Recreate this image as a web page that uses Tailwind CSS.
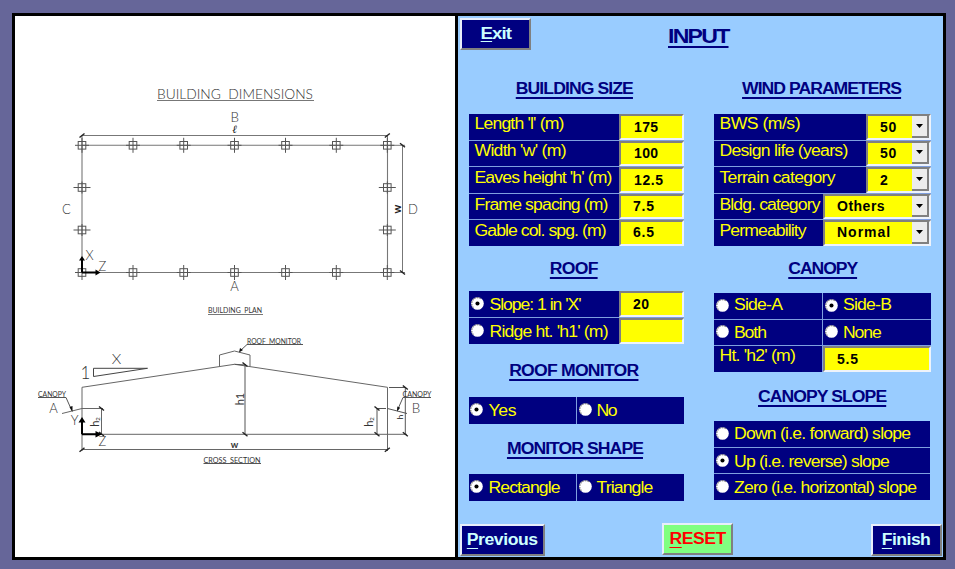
<!DOCTYPE html>
<html lang="en">
<head>
<meta charset="utf-8">
<title>Building input</title>
<script src="https://cdn.jsdelivr.net/npm/@tailwindcss/browser@4"></script>
</head>
<body class="w-[955px] h-[569px] overflow-hidden bg-[#666699] pt-[13px] pl-3 font-['Liberation_Sans',Arial,sans-serif]">
<svg class="hidden">
  <defs>
    <symbol id="off" viewBox="0 0 14 14"><circle cx="7" cy="7" r="6.8" fill="#fff"/><path d="M2.600 11.400A6 6 0 0 1 11.400 2.600" fill="none" stroke="#777" stroke-width="1.300" stroke-dasharray="1.600 1.100"/></symbol>
    <symbol id="on" viewBox="0 0 14 14"><circle cx="7" cy="7" r="6.8" fill="#fff"/><path d="M2.600 11.400A6 6 0 0 1 11.400 2.600" fill="none" stroke="#777" stroke-width="1.300" stroke-dasharray="1.600 1.100"/><circle cx="7" cy="7" r="2.200" fill="#000"/></symbol>
  </defs>
</svg>
<main class="flex w-[934px] h-[547px] border-3 border-black bg-[#99ccff]">

  <section class="w-[440px] shrink-0 bg-white">
    <svg width="440" height="541" viewBox="15 16 440 541" fill="none" stroke="#555" stroke-width="1" class="block">
      <defs>
        <g id="sq" stroke="#555"><rect x="-3.800" y="-3.800" width="7.600" height="7.600"/></g>
        <g id="v"><use href="#sq"/><path d="M0-7.500V7.500M-7 0H7" stroke="#555"/></g>
        <g id="h"><use href="#sq"/><path d="M-8.500 0H8.500M0-6V6" stroke="#555"/></g>
        <path id="ta" d="M-2.500 2L2.500-2" stroke="#222" stroke-width="1.400"/>
        <path id="tb" d="M-2.500-2L2.500 2" stroke="#222" stroke-width="1.400"/>
      </defs>
      <!-- plan -->
      <path d="M157 100.500H314M208 314.500H263" stroke="#777"/>
      <path d="M82 135.500H387.500M402.500 145V272.500M387.500 145.300H405M387.500 272.500H405" stroke="#777"/>
      <path d="M82 145.300H387.500V272.500H82Z" stroke="#777" stroke-width="1.100"/>
      <path d="M82 135V145M387.500 135V145" stroke="#777"/>
      <use href="#v" x="82" y="145.300"/><use href="#v" x="133" y="145.300"/><use href="#v" x="183.700" y="145.300"/><use href="#v" x="234.500" y="145.300"/><use href="#v" x="285.500" y="145.300"/><use href="#v" x="336.300" y="145.300"/><use href="#v" x="387.300" y="145.300"/>
      <use href="#v" x="82" y="272.500"/><use href="#v" x="133" y="272.500"/><use href="#v" x="183.700" y="272.500"/><use href="#v" x="234.500" y="272.500"/><use href="#v" x="285.500" y="272.500"/><use href="#v" x="336.300" y="272.500"/><use href="#v" x="387.300" y="272.500"/>
      <use href="#h" x="82" y="187.500"/><use href="#h" x="82" y="230"/><use href="#h" x="387.300" y="187.500"/><use href="#h" x="387.300" y="230"/>
      <use href="#ta" x="82" y="135.500"/><use href="#ta" x="387.300" y="135.500"/><use href="#tb" x="402.500" y="145.300"/><use href="#tb" x="402.500" y="272.500"/>
      <path d="M82 272.500V259M82 272.500H96" stroke="#000" stroke-width="2"/>
      <path d="M82 256L85 260.500H79ZM100.500 272.500L95.500 269.500V275.500Z" fill="#000" stroke="none"/>
      <!-- section -->
      <path d="M82 387.300V451M82 387.300L234.500 364.300L387.500 387.300V451M82 434.300H407M82 449.500H387.500" stroke="#666"/>
      <path d="M219.500 366.500V355L234.500 351L250 355V366.500" stroke="#666"/>
      <path d="M93.500 368.300H147.500L93.500 376.500Z" stroke="#444"/>
      <path d="M62 413.500L82 408.500H103M101.500 408.500V434.300" stroke="#666"/>
      <path d="M38 397.500H66L72 411M247 344.500H303M247 344.500L240 351M245 364.300V434.300M234.500 364.300L246 365" stroke="#555"/>
      <path d="M389 387.500H406M405.300 387.500V434.300M387.500 408.500L407 413.500M377 408.500V434.300M377 408.500H386" stroke="#555"/>
      <path d="M431 397.500H403L397.500 410M203.500 463.500H261" stroke="#555"/>
      <path d="M72.500 412L69.500 407L72.500 406ZM239 352.500L240 348L243 350ZM397 411.500L397.300 406.500L400.200 407.800Z" fill="#111" stroke="none"/>
      <use href="#ta" x="82" y="449.700"/><use href="#ta" x="387.300" y="449.700"/>
      <use href="#tb" x="101.500" y="408.500"/><use href="#tb" x="101.500" y="434"/><use href="#tb" x="245" y="364.500"/><use href="#tb" x="245" y="434.300"/><use href="#tb" x="377" y="408.500"/><use href="#tb" x="377" y="434.300"/><use href="#tb" x="405.300" y="387.500"/><use href="#tb" x="405.300" y="434.300"/>
      <path d="M82 434.300V421M82 434.300H96" stroke="#000" stroke-width="2"/>
      <path d="M82 417L85.500 422.500H78.500ZM102 434.300L95.500 431V437.500Z" fill="#000" stroke="none"/>
      <!-- lettering -->
      <g stroke="none" fill="#333" font-family="Lato, sans-serif" font-weight="300" font-size="13" text-anchor="middle">
        <text x="157" y="99.300" text-anchor="start" textLength="156" lengthAdjust="spacingAndGlyphs" xml:space="preserve">BUILDING  DIMENSIONS</text>
        <text x="234.700" y="122" textLength="8.500" lengthAdjust="spacingAndGlyphs">B</text><text x="234.500" y="133" font-family="'DejaVu Serif'" font-style="italic" font-size="11" fill="#111">ℓ</text>
        <text x="66.500" y="213.500">C</text><text x="413" y="213.500">D</text><text x="234.500" y="290.500">A</text>
        <text x="89.500" y="259.500">X</text><text x="102.500" y="270.500">Z</text>
        <text transform="translate(400.500 209) rotate(-90)" font-weight="700" font-size="11" fill="#222">w</text>
        <text x="116.500" y="363.500" textLength="9.500" lengthAdjust="spacingAndGlyphs">X</text><text x="85.500" y="378.500" font-size="17">1</text>
        <text x="53.500" y="413">A</text><text x="74.500" y="424.500">Y</text><text x="102.500" y="446">Z</text><text x="416" y="413" textLength="8.500" lengthAdjust="spacingAndGlyphs">B</text>
        <text transform="translate(99 422) rotate(-90)" font-size="11" font-weight="400">h<tspan font-size="6" dy="1">2</tspan></text>
        <text transform="translate(244 399) rotate(-90)" font-size="11" font-weight="400">h1</text>
        <text transform="translate(373 422) rotate(-90)" font-size="11" font-weight="400">h<tspan font-size="6" dy="1">2</tspan></text>
        <text transform="translate(402.500 417) rotate(-90)" font-size="8" font-weight="400" fill="#111">h</text>
        <text x="234.500" y="448" font-size="9" font-weight="700" textLength="7.500" lengthAdjust="spacingAndGlyphs">w</text>
      </g>
      <g stroke="none" fill="#333" font-family="Lato, sans-serif" font-size="7">
        <text x="208" y="312.800" textLength="54" lengthAdjust="spacingAndGlyphs" xml:space="preserve">BUILDING  PLAN</text>
        <text x="247" y="344" textLength="54" lengthAdjust="spacingAndGlyphs" xml:space="preserve">ROOF  MONITOR</text>
        <text x="38" y="397" textLength="28" lengthAdjust="spacingAndGlyphs">CANOPY</text>
        <text x="402.500" y="397" textLength="29" lengthAdjust="spacingAndGlyphs">CANOPY</text>
        <text x="203.500" y="462.800" textLength="57" lengthAdjust="spacingAndGlyphs" xml:space="preserve">CROSS  SECTION</text>
      </g>
    </svg>
  </section>

  <section class="ml-[3px] w-[485px] h-[541px] shrink-0 flex flex-col justify-between shadow-[-3px_0_0_#000] text-[#000080]">
    <header class="flex pt-[2px] pl-[2px] h-[66px]">
      <button class="w-[71px] h-[32px] border-2 border-t-[#e8eefa] border-l-[#e8eefa] border-b-[#808080] border-r-[#808080] bg-[#000080] text-[#ccffff] font-bold text-[17px] leading-[28px] underline-offset-2"><span class="inline-block scale-x-110 tracking-[-0.9px]"><span class="underline">E</span>xit</span></button>
      <h1 class="ml-[137px] mt-[4px] h-[28px] leading-[28px] text-[21px] font-bold origin-left scale-x-110 tracking-[-1.6px] underline decoration-2 underline-offset-[3px]">INPUT</h1>
    </header>

    <div class="flex flex-1 pl-[11px] text-[16px] leading-[18px]">
      <div class="w-[215px] shrink-0">
        <h2 class="h-[32px] pl-[42.5px] -mt-[2px] whitespace-nowrap font-bold origin-left scale-x-110 tracking-[-0.83px] underline underline-offset-[3px] decoration-[1.5px]">BUILDING SIZE</h2>
        <div class="mt-[2px] grid grid-rows-5 h-[132px] gap-[1px] bg-[#7f9fdf] text-[#ffff00]">
          <div class="flex bg-[#000080]"><span class="w-[150px] pl-[5px] pt-px whitespace-nowrap origin-left scale-x-110 tracking-[-0.75px]">Length 'l' (m)</span><div class="w-[65px] border-2 border-t-[#808080] border-l-[#808080] border-b-[#eef3fb] border-r-[#eef3fb] bg-[#ffff00] pl-[13px] text-black font-bold text-[14px] leading-[22px] tracking-[0.4px]">175</div></div>
          <div class="flex bg-[#000080]"><span class="w-[150px] pl-[5px] pt-px whitespace-nowrap origin-left scale-x-110 tracking-[-0.65px]">Width 'w' (m)</span><div class="w-[65px] border-2 border-t-[#808080] border-l-[#808080] border-b-[#eef3fb] border-r-[#eef3fb] bg-[#ffff00] pl-[13px] text-black font-bold text-[14px] leading-[21px] tracking-[0.4px]">100</div></div>
          <div class="flex bg-[#000080]"><span class="w-[150px] pl-[5px] pt-[2px] whitespace-nowrap origin-left scale-x-110 tracking-[-0.79px]">Eaves height 'h' (m)</span><div class="w-[65px] border-2 border-t-[#808080] border-l-[#808080] border-b-[#eef3fb] border-r-[#eef3fb] bg-[#ffff00] pl-[13px] text-black font-bold text-[14px] leading-[22px] tracking-[0.6px]">12.5</div></div>
          <div class="flex bg-[#000080]"><span class="w-[150px] pl-[5px] pt-[2px] whitespace-nowrap origin-left scale-x-110 tracking-[-0.78px]">Frame spacing (m)</span><div class="w-[65px] border-2 border-t-[#808080] border-l-[#808080] border-b-[#eef3fb] border-r-[#eef3fb] bg-[#ffff00] pl-[12px] text-black font-bold text-[14px] leading-[21px] tracking-[0.8px]">7.5</div></div>
          <div class="flex bg-[#000080]"><span class="w-[150px] pl-[5px] pt-[2px] whitespace-nowrap origin-left scale-x-110 tracking-[-0.84px]">Gable col. spg. (m)</span><div class="w-[65px] border-2 border-t-[#808080] border-l-[#808080] border-b-[#eef3fb] border-r-[#eef3fb] bg-[#ffff00] pl-[12px] text-black font-bold text-[14px] leading-[21px] tracking-[0.8px]">6.5</div></div>
        </div>

        <h2 class="mt-[14px] h-[31px] pl-[73.5px] font-bold origin-left scale-x-110 tracking-[-0.7px] underline underline-offset-[3px] decoration-[1.5px]">ROOF</h2>
        <div class="grid grid-rows-2 h-[53px] gap-[1px] bg-[#7f9fdf] text-[#ffff00]">
          <div class="flex bg-[#000080]"><svg class="ml-[2px] mt-[6px] size-[13px]"><use href="#on"/></svg><span class="w-[135px] pl-[5px] pt-[5px] whitespace-nowrap origin-left scale-x-110 tracking-[-0.94px]">Slope: 1 in 'X'</span><div class="w-[65px] border-2 border-t-[#808080] border-l-[#808080] border-b-[#eef3fb] border-r-[#eef3fb] bg-[#ffff00] pl-[12px] text-black font-bold text-[14px] leading-[22px] tracking-[0.4px]">20</div></div>
          <div class="flex bg-[#000080]"><svg class="ml-[2px] mt-[6px] size-[13px]"><use href="#off"/></svg><span class="w-[135px] pl-[5px] pt-[5px] whitespace-nowrap origin-left scale-x-110 tracking-[-0.74px]">Ridge ht. 'h1' (m)</span><div class="w-[65px] border-2 border-t-[#808080] border-l-[#808080] border-b-[#eef3fb] border-r-[#eef3fb] bg-[#ffff00]"></div></div>
        </div>

        <h2 class="mt-[18px] h-[35px] pl-[36.5px] whitespace-nowrap font-bold origin-left scale-x-110 tracking-[-0.7px] underline underline-offset-[3px] decoration-[1.5px]">ROOF MONITOR</h2>
        <div class="grid grid-cols-2 h-[27px] gap-[1px] bg-[#7f9fdf] text-[#ffff00]">
          <div class="flex bg-[#000080]"><svg class="ml-[1px] mt-[6px] size-[13px]"><use href="#on"/></svg><span class="pl-[5px] pt-[5px] origin-left scale-x-110 tracking-[-0.3px]">Yes</span></div>
          <div class="flex bg-[#000080]"><svg class="ml-[2px] mt-[6px] size-[13px]"><use href="#off"/></svg><span class="pl-[4px] pt-[5px] origin-left scale-x-110 tracking-[-1.2px]">No</span></div>
        </div>

        <h2 class="mt-[16px] h-[34px] pl-[34.5px] whitespace-nowrap font-bold origin-left scale-x-110 tracking-[-0.86px] underline underline-offset-[3px] decoration-[1.5px]">MONITOR SHAPE</h2>
        <div class="grid grid-cols-2 h-[27px] gap-[1px] bg-[#7f9fdf] text-[#ffff00]">
          <div class="flex bg-[#000080]"><svg class="ml-[1px] mt-[6px] size-[13px]"><use href="#on"/></svg><span class="pl-[5px] pt-[5px] origin-left scale-x-110 tracking-[-0.82px]">Rectangle</span></div>
          <div class="flex bg-[#000080]"><svg class="ml-[2px] mt-[6px] size-[13px]"><use href="#off"/></svg><span class="pl-[4px] pt-[5px] origin-left scale-x-110 tracking-[-0.77px]">Triangle</span></div>
        </div>
      </div>

      <div class="ml-[30px] w-[217px] shrink-0">
        <h2 class="h-[32px] pl-[25.5px] -mt-[2px] whitespace-nowrap font-bold origin-left scale-x-110 tracking-[-0.89px] underline underline-offset-[3px] decoration-[1.5px]">WIND PARAMETERS</h2>
        <div class="mt-[2px] grid grid-rows-5 h-[132px] gap-[1px] bg-[#7f9fdf] text-[#ffff00]">
          <div class="flex bg-[#000080]"><span class="w-[152px] pl-[5px] pt-px whitespace-nowrap origin-left scale-x-110 tracking-[-0.46px]">BWS (m/s)</span><div class="flex w-[65px] border-2 border-t-[#808080] border-l-[#808080] border-b-[#eef3fb] border-r-[#eef3fb] bg-[#ffff00] pl-[12px] text-black font-bold text-[14px] leading-[22px] tracking-[0.8px]">50<i class="ml-auto flex w-[17px] items-center justify-center border-r-2 border-b-2 border-[#808080] bg-[#ececec]"><svg width="7" height="4"><path d="M0 0H7L3.500 4Z"/></svg></i></div></div>
          <div class="flex bg-[#000080]"><span class="w-[152px] pl-[5px] pt-px whitespace-nowrap origin-left scale-x-110 tracking-[-0.66px]">Design life (years)</span><div class="flex w-[65px] border-2 border-t-[#808080] border-l-[#808080] border-b-[#eef3fb] border-r-[#eef3fb] bg-[#ffff00] pl-[12px] text-black font-bold text-[14px] leading-[21px] tracking-[0.8px]">50<i class="ml-auto flex w-[17px] items-center justify-center border-r-2 border-b-2 border-[#808080] bg-[#ececec]"><svg width="7" height="4"><path d="M0 0H7L3.500 4Z"/></svg></i></div></div>
          <div class="flex bg-[#000080]"><span class="w-[152px] pl-[5px] pt-[2px] whitespace-nowrap origin-left scale-x-110 tracking-[-0.62px]">Terrain category</span><div class="flex w-[65px] border-2 border-t-[#808080] border-l-[#808080] border-b-[#eef3fb] border-r-[#eef3fb] bg-[#ffff00] pl-[12px] text-black font-bold text-[14px] leading-[22px]">2<i class="ml-auto flex w-[17px] items-center justify-center border-r-2 border-b-2 border-[#808080] bg-[#ececec]"><svg width="7" height="4"><path d="M0 0H7L3.500 4Z"/></svg></i></div></div>
          <div class="flex bg-[#000080]"><span class="w-[109px] pl-[5px] pt-[2px] whitespace-nowrap origin-left scale-x-110 tracking-[-0.81px]">Bldg. category</span><div class="flex w-[108px] border-2 border-t-[#808080] border-l-[#808080] border-b-[#eef3fb] border-r-[#eef3fb] bg-[#ffff00] pl-[12px] text-black font-bold text-[14px] leading-[21px] tracking-[0.5px]">Others<i class="ml-auto flex w-[17px] items-center justify-center border-r-2 border-b-2 border-[#808080] bg-[#ececec]"><svg width="7" height="4"><path d="M0 0H7L3.500 4Z"/></svg></i></div></div>
          <div class="flex bg-[#000080]"><span class="w-[109px] pl-[5px] pt-[2px] whitespace-nowrap origin-left scale-x-110 tracking-[-0.81px]">Permeability</span><div class="flex w-[108px] border-2 border-t-[#808080] border-l-[#808080] border-b-[#eef3fb] border-r-[#eef3fb] bg-[#ffff00] pl-[12px] text-black font-bold text-[14px] leading-[21px] tracking-[1px]">Normal<i class="ml-auto flex w-[17px] items-center justify-center border-r-2 border-b-2 border-[#808080] bg-[#ececec]"><svg width="7" height="4"><path d="M0 0H7L3.500 4Z"/></svg></i></div></div>
        </div>

        <h2 class="mt-[14px] h-[33px] pl-[67.5px] font-bold origin-left scale-x-110 tracking-[-0.98px] underline underline-offset-[3px] decoration-[1.5px]">CANOPY</h2>
        <div class="grid grid-cols-2 grid-rows-3 h-[79px] gap-[1px] bg-[#7f9fdf] text-[#ffff00]">
          <div class="flex bg-[#000080]"><svg class="ml-[2px] mt-[6px] size-[13px]"><use href="#off"/></svg><span class="pl-[4.5px] pt-[3px] origin-left scale-x-110 tracking-[-0.7px]">Side-A</span></div>
          <div class="flex bg-[#000080]"><svg class="ml-[2px] mt-[6px] size-[13px]"><use href="#on"/></svg><span class="pl-[4.5px] pt-[3px] origin-left scale-x-110 tracking-[-0.7px]">Side-B</span></div>
          <div class="flex bg-[#000080]"><svg class="ml-[2px] mt-[5px] size-[13px]"><use href="#off"/></svg><span class="pl-[4.5px] pt-[4px] origin-left scale-x-110 tracking-[-0.97px]">Both</span></div>
          <div class="flex bg-[#000080]"><svg class="ml-[2px] mt-[5px] size-[13px]"><use href="#off"/></svg><span class="pl-[4.5px] pt-[4px] origin-left scale-x-110 tracking-[-0.95px]">None</span></div>
          <div class="flex bg-[#000080]"><span class="pl-[5px] pt-px origin-left scale-x-110 tracking-[-0.72px]">Ht. 'h2' (m)</span></div>
          <div class="border-2 border-t-[#808080] border-l-[#808080] border-b-[#eef3fb] border-r-[#eef3fb] bg-[#ffff00] pl-[12px] text-black font-bold text-[14px] leading-[22px] tracking-[0.8px]">5.5</div>
        </div>

        <h2 class="mt-[16px] h-[33px] pl-[40px] whitespace-nowrap font-bold origin-left scale-x-110 tracking-[-0.86px] underline underline-offset-[3px] decoration-[1.5px]">CANOPY SLOPE</h2>
        <div class="grid grid-rows-3 h-[79px] w-[216px] gap-[1px] bg-[#7f9fdf] text-[#ffff00]">
          <div class="flex bg-[#000080]"><svg class="ml-[2px] mt-[6px] size-[13px]"><use href="#off"/></svg><span class="pl-[4.5px] pt-[4px] whitespace-nowrap origin-left scale-x-110 tracking-[-0.7px]">Down (i.e. forward) slope</span></div>
          <div class="flex bg-[#000080]"><svg class="ml-[2px] mt-[6px] size-[13px]"><use href="#on"/></svg><span class="pl-[4.5px] pt-[5px] whitespace-nowrap origin-left scale-x-110 tracking-[-0.71px]">Up (i.e. reverse) slope</span></div>
          <div class="flex bg-[#000080]"><svg class="ml-[2px] mt-[6px] size-[13px]"><use href="#off"/></svg><span class="pl-[4.5px] pt-[5px] whitespace-nowrap origin-left scale-x-110 tracking-[-0.72px]">Zero (i.e. horizontal) slope</span></div>
        </div>
      </div>
    </div>

    <footer class="flex h-[34px] items-start pl-[2px] font-bold text-[16px] leading-[28px] underline-offset-[3px]">
      <button class="mt-[1px] w-[85px] h-[32px] border-2 border-t-[#e8eefa] border-l-[#e8eefa] border-b-[#808080] border-r-[#808080] bg-[#000080] text-[#ccffff]"><span class="inline-block scale-x-110 tracking-[-0.4px]"><span class="underline">P</span>revious</span></button>
      <button class="ml-[117px] w-[71px] h-[32px] border-2 border-t-[#e8eefa] border-l-[#e8eefa] border-b-[#808080] border-r-[#808080] bg-[#80ff80] text-[#ff0000]"><span class="inline-block scale-x-110 tracking-[-0.4px]"><span class="underline">R</span>ESET</span></button>
      <button class="ml-[138px] mt-[1px] w-[71px] h-[32px] border-2 border-t-[#e8eefa] border-l-[#e8eefa] border-b-[#808080] border-r-[#808080] bg-[#000080] text-[#ccffff]"><span class="inline-block scale-x-110 tracking-[-0.5px]"><span class="underline">F</span>inish</span></button>
    </footer>
  </section>
</main>
</body>
</html>
